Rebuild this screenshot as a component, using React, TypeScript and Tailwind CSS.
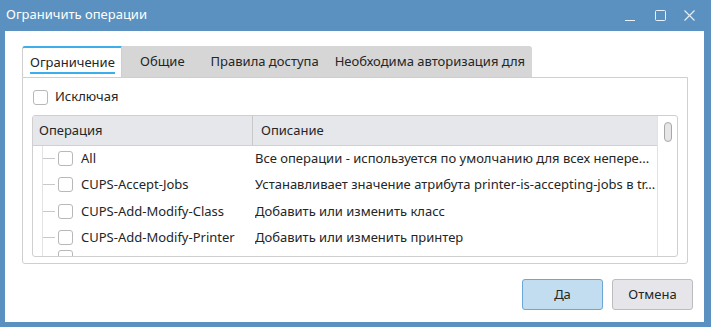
import React from 'react';

const font = "font-['Noto_Sans',sans-serif]";

const rows = [
  { op: 'All', desc: 'Все операции - используется по умолчанию для всех непере...' },
  { op: 'CUPS-Accept-Jobs', desc: 'Устанавливает значение атрибута printer-is-accepting-jobs в tr...' },
  { op: 'CUPS-Add-Modify-Class', desc: 'Добавить или изменить класс' },
  { op: 'CUPS-Add-Modify-Printer', desc: 'Добавить или изменить принтер' },
];

const Box = () => (
  <span className="block w-[15px] h-[15px] shrink-0 rounded-[3px] border border-[#b8b8b8] bg-white" />
);

export default function App() {
  return (
    <div className={`w-[711px] h-[327px] bg-[#5b91c0] flex flex-col text-[13px] text-[#232627] ${font}`}>
      {/* Title bar */}
      <div className="h-[31px] shrink-0 flex items-center pl-[6px] pr-[16px] text-white">
        <span className="flex-1 -mt-[1px]">Ограничить операции</span>
        <svg width="11" height="11" viewBox="0 0 11 11" className="mr-[19px] mt-[2px]" stroke="#e8f0f8" strokeWidth="1" fill="none">
          <path d="M0 9.5h10" />
        </svg>
        <svg width="11" height="11" viewBox="0 0 11 11" className="mr-[18px]" stroke="#e8f0f8" strokeWidth="1" fill="none">
          <rect x="0.5" y="0.5" width="10" height="10" rx="1" />
        </svg>
        <svg width="11" height="11" viewBox="0 0 11 11" stroke="#e8f0f8" strokeWidth="1.1" fill="none">
          <path d="M0.5 0.5l10 10M10.5 0.5l-10 10" />
        </svg>
      </div>

      {/* Content */}
      <div className="flex-1 ml-[5px] mr-[7px] mb-[5px] bg-white flex flex-col pt-[15px] px-[17px]">
        {/* Tabs */}
        <div className="flex h-[31px] shrink-0">
          <div className="w-[100px] bg-white rounded-tl-[3px] border-t-2 border-[#3daee9] border-x border-x-[#cfcfcf] flex items-center pl-[7px] relative">
            <span>Ограничение</span>
            <span className="absolute left-[7px] top-[24px] w-[85px] h-[2px] bg-[#3daee9]" />
          </div>
          <div className="w-[410px] bg-[#d6d6d6] rounded-tr-[3px] flex items-center pt-[1px]">
            <span className="ml-[18px]">Общие</span>
            <span className="ml-[26px]">Правила доступа</span>
            <span className="ml-[16px]">Необходима авторизация для</span>
          </div>
        </div>

        {/* Panel */}
        <div className="w-[666px] h-[187px] border border-[#cfcfcf] rounded-b-[3px] flex flex-col pl-[9px] pr-[9px] pt-[11px]">
          <div className="flex items-center gap-[7px] pl-[1px] h-[16px]">
            <Box />
            <span>Исключая</span>
          </div>
          <div className="mt-[10px] h-[142px] border border-[#cfcfcf] rounded-[3px] flex overflow-hidden">
            <div className="flex-1 flex flex-col">
              <div className="h-[30px] shrink-0 bg-[#e6e7eb] border-b border-[#d0d0d0] flex items-center">
                <span className="w-[220px] pl-[6px] border-r border-[#c8c8c8] h-full flex items-center">Операция</span>
                <span className="pl-[8px]">Описание</span>
              </div>
              <div className="flex-1 flex flex-col border-l border-[#e2e2e2] ml-[9px] relative overflow-hidden">
                {rows.map((r) => (
                  <div key={r.op} className="h-[26.5px] shrink-0 flex items-center first:mt-[-1px]">
                    <span className="w-[12px] h-px bg-[#c8c8c8] shrink-0" />
                    <span className="ml-[3px]"><Box /></span>
                    <span className="ml-[8px] w-[174px] shrink-0 whitespace-nowrap">{r.op}</span>
                    <span className="whitespace-nowrap overflow-hidden">{r.desc}</span>
                  </div>
                ))}
                <div className="ml-[15px] mt-[-1px]"><Box /></div>
              </div>
            </div>
            {/* Scrollbar */}
            <div className="w-[20px] border-l border-[#e2e2e2] flex justify-center pt-[6px]">
              <span className="block w-[8px] h-[20px] rounded-full border border-[#a8a8a8] bg-[#e6e6e6]" />
            </div>
          </div>
        </div>

        {/* Buttons */}
        <div className="flex justify-end gap-[9px] mt-[15px] -mr-[6px]">
          <button className="w-[81px] h-[31px] rounded-[3px] border border-[#6aa6d6] bg-[#c2ddf0]">Да</button>
          <button className="w-[81px] h-[31px] rounded-[3px] border border-[#bcbcbc] bg-[#e6e6ea]">Отмена</button>
        </div>
      </div>
    </div>
  );
}
